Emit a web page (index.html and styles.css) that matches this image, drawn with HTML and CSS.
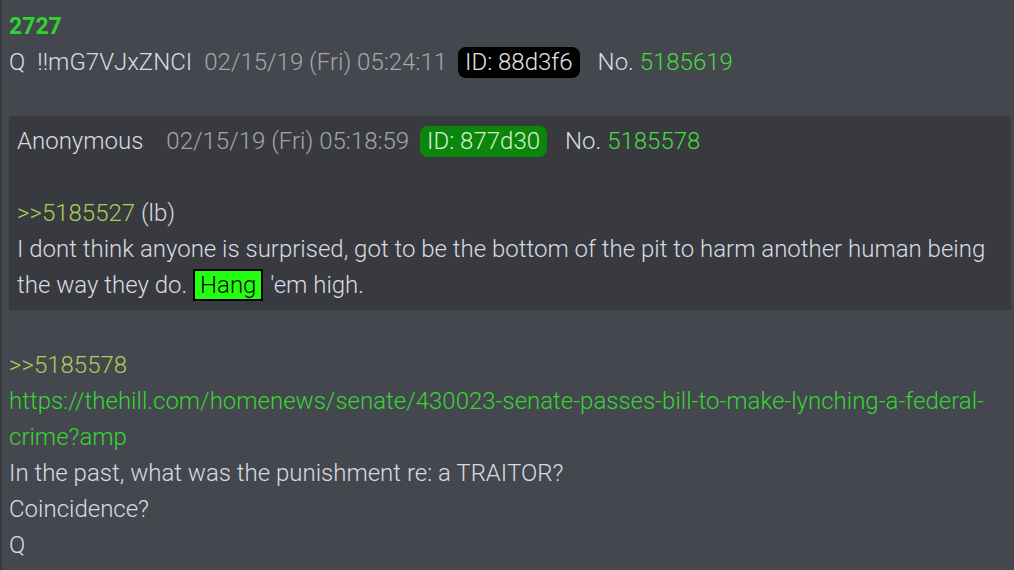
FILE: index.html
```html
<!DOCTYPE html>
<html lang="en">
<head>
    <meta charset="UTF-8">
    <meta name="viewport" content="width=device-width, initial-scale=1.0">
    <title>2727</title>
    <link rel="stylesheet" href="styles.css">
</head>
<body>
	<div class="post">
		<div class="title">2727</div>
		<div class="intro">
			<span class="name">Q</span>
			<span class="trip">!!mG7VJxZNCI</span>
			<span class="date">02/15/19 (Fri) 05:24:11</span>
			<span class="uid dark">ID: 88d3f6</span>
			<span class="no">No. <a class="postno">5185619</a></span>
		</div>
		<div class="spacer"></div>
		<div class="quote">
			<div class="intro">
				<span class="name">Anonymous</span>
				<span class="date wide">02/15/19 (Fri) 05:18:59</span>
				<span class="uid green">ID: 877d30</span>
				<span class="no">No. <a class="postno">5185578</a></span>
			</div>
			<div class="spacer"></div>
			<div class="body">
				<a class="ref">&gt;&gt;5185527</a> (lb)<br>
				I dont think anyone is surprised, got to be the bottom of the pit to harm another human being the way they do. <span class="hl">Hang</span> 'em high.
			</div>
		</div>
		<div class="body outer">
			<a class="ref">&gt;&gt;5185578</a><br>
			<a class="link">https://thehill.com/homenews/senate/430023-senate-passes-bill-to-make-lynching-a-federal-crime?amp</a><br>
			In the past, what was the punishment re: a TRAITOR?<br>
			Coincidence?<br>
			Q
		</div>
	</div>
</body>
</html>
```

FILE: styles.css
```css
html, body {
  margin: 0;
  padding: 0;
  background: #45474f;
}
body {
  font-family: Roboto, "Noto Sans", sans-serif;
  font-size: 24px;
  font-weight: 300;
  line-height: 36px;
  color: #d8dbe3;
  height: 570px;
  overflow: hidden;
}
.post {
  border-left: 2px solid #383a40;
  padding: 9px 3px 0 7px;
  min-height: 570px;
  box-sizing: border-box;
}
.title {
  color: #2ed52e;
  font-weight: bold;
  font-size: 23px;
  line-height: 35px;
}
.intro {
  display: flex;
  align-items: center;
  white-space: nowrap;
}
.name {
  color: #d8dbe3;
  margin-right: 12px;
}
.trip {
  color: #d8dbe3;
  margin-right: 12px;
}
.date {
  color: #a3a6ab;
  margin-right: 11px;
}
.date.wide {
  margin-left: 11px;
  margin-right: 11px;
}
.uid {
  border-radius: 8px;
  padding: 0 7px;
  line-height: 31px;
  margin-right: 18px;
}
.uid.dark {
  background: #000;
  color: #e4e4e8;
}
.uid.green {
  background: #0b860b;
  color: #d6f0d6;
}
.no {
  color: #d8dbe3;
}
.postno {
  color: #44dd3e;
}
.spacer {
  height: 36px;
}
.quote {
  background: #393a3f;
  padding: 7px 8px 7px 8px;
  margin-bottom: 37px;
}
.ref {
  color: #a5d05a;
}
.link {
  color: #37d433;
}
.hl {
  background: #22ff11;
  color: #0a0a0a;
  border: 2px solid #000;
  padding: 0 5px;
  margin-right: 1px;
}
```
